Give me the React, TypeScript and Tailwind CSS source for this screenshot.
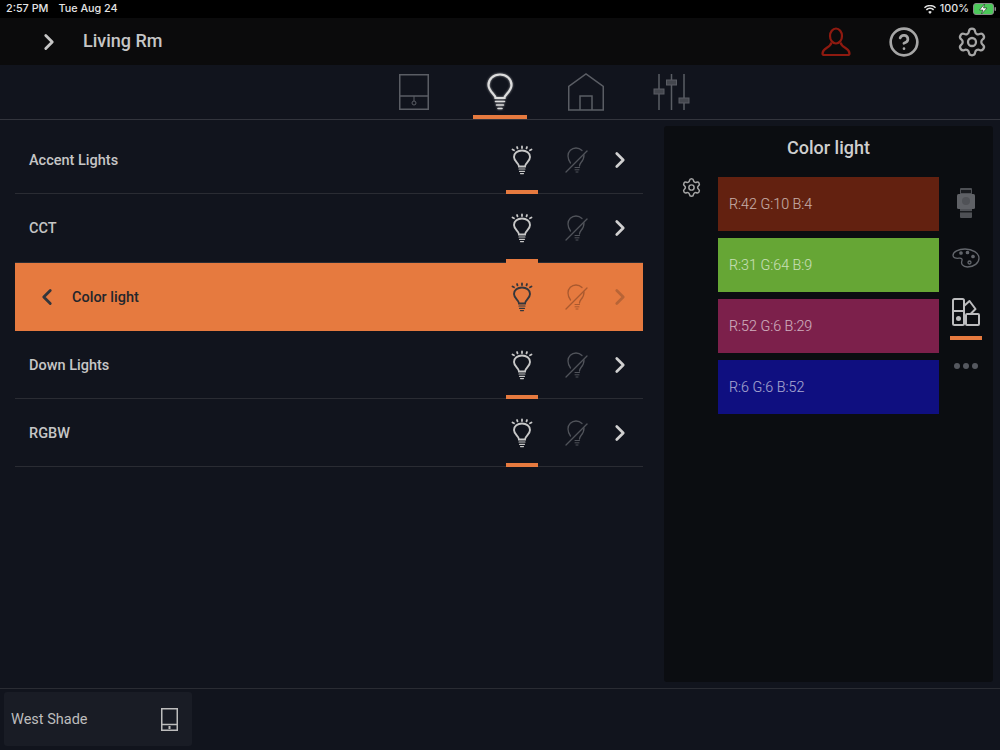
import { ChevronLeft, ChevronRight, CircleHelp, Settings } from 'lucide-react'

const rows = ['Accent Lights', 'CCT', 'Color light', 'Down Lights', 'RGBW']

const swatches = [
  { label: 'R:42 G:10 B:4', color: 'bg-[#632110]' },
  { label: 'R:31 G:64 B:9', color: 'bg-[#66a635]' },
  { label: 'R:52 G:6 B:29', color: 'bg-[#7c204b]' },
  { label: 'R:6 G:6 B:52', color: 'bg-[#0f0f80]' },
]

function UserIcon() {
  return (
    <svg width="30" height="30" viewBox="0 0 30 30" fill="none" stroke="#8f1a10" strokeWidth="2.200">
      <ellipse cx="15" cy="9" rx="6" ry="7.500" />
      <path d="M10.500 15.500c-.5 2.500-2.500 4-5 5.500C3 22.500 1.500 24.500 1.500 26.500c0 1 .8 1.500 2 1.500h23c1.200 0 2-.5 2-1.500 0-2-1.500-4-4-5.500-2.500-1.500-4.500-3-5-5.500" />
    </svg>
  )
}

function ShadeIcon({ className }: { className?: string }) {
  return (
    <svg className={className} viewBox="0 0 30 36" fill="none" stroke="#5a5d64" strokeWidth="1.500">
      <rect x="0.750" y="0.750" width="28.500" height="34.500" />
      <path d="M0.750 22h28.500" />
      <path d="M15 22v5" strokeWidth="1" />
      <circle cx="15" cy="29" r="2" strokeWidth="1" />
    </svg>
  )
}

function TabBulb() {
  return (
    <svg
      className="drop-shadow-[0_0_1px_#ffffff90]"
      width="28"
      height="38"
      viewBox="0 0 28 38"
      fill="none"
      stroke="#dcdcdc"
      strokeWidth="2.200"
      strokeLinecap="round"
    >
      <path d="M9.500 25c0-3.500-7-6.500-7-13C2.500 6 7.500 1.500 14 1.500S25.500 6 25.500 12c0 6.500-7 9.500-7 13z" />
      <path d="M9.500 28.500h9M10.500 32h7M12 35.500h4" strokeWidth="1.600" />
    </svg>
  )
}

function HouseIcon() {
  return (
    <svg width="36" height="38" viewBox="0 0 36 38" fill="none" stroke="#5a5d64" strokeWidth="1.500">
      <path d="M.750 37V13.500L18 1l17.250 12.500V37z" />
      <path d="M12 37V23h12v14" />
    </svg>
  )
}

function SlidersIcon() {
  return (
    <svg width="38" height="38" viewBox="0 0 38 38" fill="none">
      <path d="M6 1v36M18.500 1v36M31 1v36" stroke="#5a5d64" strokeWidth="1.500" />
      <rect x="1" y="16" width="10" height="5" fill="#44474e" stroke="#5a5d64" />
      <rect x="13.500" y="7" width="10" height="5" fill="#44474e" stroke="#5a5d64" />
      <rect x="26" y="25" width="10" height="5" fill="#44474e" stroke="#5a5d64" />
    </svg>
  )
}

function RayBulb({ stroke }: { stroke: string }) {
  return (
    <svg width="22" height="30" viewBox="0 0 22 30" fill="none" stroke={stroke} strokeLinecap="round">
      <path d="M1.500 4.500l1.500.8M6 2l.5 1.400M11 1.500V3M16 2l-.5 1.400M20.500 4.500l-1.500.8" strokeWidth="1.800" />
      <path d="M8 21.500c0-3-5-5-5-9.500 0-3.700 3.500-6.500 8-6.500s8 2.800 8 6.500c0 4.500-5 6.500-5 9.500z" strokeWidth="1.900" />
      <path d="M8 24h6M8.500 26.300h5M9.500 28.600h3" strokeWidth="1.200" />
    </svg>
  )
}

function OffBulb({ stroke }: { stroke: string }) {
  return (
    <svg width="24" height="28" viewBox="0 0 24 28" fill="none" stroke={stroke} strokeLinecap="round">
      <path d="M6.500 17C5 15 4 12.500 4 10c0-4.500 3.500-8 8-8 2.500 0 4.500 1 6 2.500M20 9c0 3-1 5.500-3 7.500-1 1.300-1.500 2-1.500 3.500" strokeWidth="1.300" />
      <path d="M2 26L23 5" strokeWidth="1.300" />
      <path d="M11 21.500h4.500M11 23.800h4M12 26h2" strokeWidth="1" />
    </svg>
  )
}

function RemoteIcon() {
  return (
    <svg width="20" height="30" viewBox="0 0 20 30">
      <rect x="4" y="0" width="12" height="30" fill="#4e5055" rx="1" />
      <rect x="1" y="6" width="18" height="15" fill="#5f6166" rx="1.500" />
      <circle cx="10" cy="13" r="4" fill="#505257" />
      <rect x="5" y="2" width="10" height="3" fill="#1a1c20" />
      <rect x="4" y="23" width="12" height="1.500" fill="#1a1c20" />
    </svg>
  )
}

function PaletteIcon() {
  return (
    <svg width="28" height="20" viewBox="0 0 28 20" fill="none" stroke="#63666c" strokeWidth="1.300">
      <path d="M13 1C6.500 1 1 4 1 7.500c0 2.500 3 3 6 2.700 3-.3 3.500 1 2.800 3-.8 2.200.5 5.800 5.700 5.800 6.500 0 11.500-4 11.500-9S20.500 1 13 1z" />
      <circle cx="9" cy="5" r="1.200" fill="#63666c" />
      <circle cx="15.500" cy="4.500" r="1.200" fill="#63666c" />
      <circle cx="21" cy="8.500" r="1.200" fill="#63666c" />
      <circle cx="17.500" cy="14.500" r="1.500" />
    </svg>
  )
}

function SwatchesIcon() {
  return (
    <svg width="28" height="28" viewBox="0 0 28 28" fill="none" stroke="#bcbcbe" strokeWidth="2" strokeLinejoin="round">
      <rect x="1" y="1" width="11" height="26" rx="1.500" />
      <path d="M1 13h11" />
      <circle cx="6.500" cy="20.500" r="2.500" fill="#bcbcbe" stroke="none" />
      <path d="M12 8l5.500-5 6 8-5 5" />
      <rect x="14" y="16" width="13" height="11" rx="1" />
    </svg>
  )
}

function ListRow({ name }: { name: string }) {
  const active = name === 'Color light'
  return (
    <div
      className={`relative flex h-[68.300px] shrink-0 items-center ${
        active ? 'bg-[#e67a3f] text-[#23262c]' : 'border-b border-[#2a2c33] text-[#c6c6c6]'
      }`}
    >
      {active ? (
        <>
          <ChevronLeft className="ml-[19px] text-[#33363c]" size={26} strokeWidth={2.600} />
          <span className="ml-[12px] flex-1 pt-[2px] text-[14.500px] font-medium">{name}</span>
        </>
      ) : (
        <span className="ml-[14px] flex-1 pt-[2px] text-[14.500px] font-medium">{name}</span>
      )}
      <div className="flex w-[32px] justify-center">
        <RayBulb stroke={active ? '#33363c' : '#c8c8c8'} />
      </div>
      <div className="ml-[22px] flex w-[32px] justify-center">
        <OffBulb stroke={active ? '#a9592f' : '#50535a'} />
      </div>
      <div className="ml-[15px] mr-[10px] flex w-[26px] justify-center">
        <ChevronRight className={active ? 'text-[#b86436]' : 'text-[#d0d0d0]'} size={26} strokeWidth={2.500} />
      </div>
      {!active && <div className="absolute bottom-[-1px] right-[105px] h-[4px] w-[32px] bg-[#e67a3f]" />}
    </div>
  )
}

export default function App() {
  return (
    <div className="flex h-[750px] w-[1000px] flex-col overflow-hidden bg-[#11141d] font-[Roboto,sans-serif]">
      {/* Status bar */}
      <div className="flex h-[18px] items-center justify-between bg-black pl-[6px] pr-[4px] font-[Inter,sans-serif] text-[10.800px] font-medium text-[#e4e4e4]">
        <div className="flex gap-[10px]">
          <span>2:57 PM</span>
          <span>Tue Aug 24</span>
        </div>
        <div className="flex items-center gap-[4px]">
          <svg width="12" height="9" viewBox="0 0 12 9" fill="#e4e4e4">
            <path d="M6 9L4.200 6.900a2.600 2.600 0 013.600 0zM2.900 5.500L1.800 4.300a6 6 0 018.400 0L9.100 5.500a4.500 4.500 0 00-6.200 0zM.9 3.300L0 2.200a8.700 8.700 0 0112 0l-.9 1.100a7.400 7.400 0 00-10.200 0z" />
          </svg>
          <span>100%</span>
          <svg width="23" height="12" viewBox="0 0 23 12">
            <rect x=".5" y=".5" width="20" height="11" rx="2.500" fill="#4cc85a" stroke="#8a8a8a" />
            <rect x="21.500" y="4" width="1.500" height="4" rx=".7" fill="#8a8a8a" />
            <path d="M11.500 1L6.500 7h3.500L8.500 11l5.500-6h-3.500z" fill="#fff" stroke="#101010" strokeWidth=".5" />
          </svg>
        </div>
      </div>

      {/* Header */}
      <div className="flex h-[47px] items-center bg-[#0b0b0c] pr-[12px] text-[#c6c6c6]">
        <ChevronRight className="ml-[36px]" size={26} strokeWidth={2.600} />
        <span className="ml-[21px] flex-1 pb-[2px] text-[18px] font-medium">Living Rm</span>
        <UserIcon />
        <CircleHelp className="ml-[37px] text-[#a6a6a6]" size={32} strokeWidth={2} />
        <Settings className="ml-[36px] text-[#a6a6a6]" size={32} strokeWidth={1.700} />
      </div>

      {/* Tabs */}
      <div className="flex h-[55px] shrink-0 border-b border-[#33353d] pl-[371px]">
        <div className="flex w-[86px] justify-center pt-[9px]">
          <ShadeIcon className="h-[36px] w-[30px]" />
        </div>
        <div className="relative flex w-[86px] justify-center pt-[8px]">
          <TabBulb />
          <div className="absolute bottom-0 left-[16px] h-[4px] w-[54px] bg-[#e67a3f]" />
        </div>
        <div className="flex w-[86px] justify-center pt-[8px]">
          <HouseIcon />
        </div>
        <div className="flex w-[86px] justify-center pt-[8px]">
          <SlidersIcon />
        </div>
      </div>

      {/* Main */}
      <div className="flex min-h-0 flex-1 pl-[15px] pt-[6px]">
        <div className="flex w-[628px] flex-col">
          {rows.map((name) => (
            <ListRow key={name} name={name} />
          ))}
        </div>

        <div className="ml-[21px] h-[556px] w-[329px] rounded-[3px] bg-[#0b0d11]">
          <div className="flex h-[51px] items-center justify-center pb-[9px] text-[18px] font-medium text-[#cfcfcf]">
            Color light
          </div>
          <div className="flex">
            <div className="flex w-[54px] justify-center">
              <Settings className="text-[#a6a6a6]" size={21} strokeWidth={1.700} />
            </div>
            <div className="flex w-[221px] flex-col gap-[7px]">
              {swatches.map((s) => (
                <div key={s.label} className={`flex h-[54px] items-center pl-[11px] pt-[1px] text-[14.300px] font-light text-white/65 ${s.color}`}>
                  {s.label}
                </div>
              ))}
            </div>
            <div className="flex w-[54px] flex-col items-center pt-[11px]">
              <RemoteIcon />
              <div className="mt-[30px] flex">
                <PaletteIcon />
              </div>
              <div className="mt-[30px] flex">
                <SwatchesIcon />
              </div>
              <div className="mt-[10px] h-[4px] w-[32px] bg-[#e67a3f]" />
              <div className="mt-[23px] flex gap-[3px]">
                <span className="h-[6px] w-[6px] rounded-full bg-[#55585f]" />
                <span className="h-[6px] w-[6px] rounded-full bg-[#55585f]" />
                <span className="h-[6px] w-[6px] rounded-full bg-[#55585f]" />
              </div>
            </div>
          </div>
        </div>
      </div>

      {/* Footer */}
      <div className="h-[62px] shrink-0 border-t border-[#2a2c33] pl-[4px] pt-[3px]">
        <div className="flex h-[54px] w-[188px] items-center justify-between rounded-[3px] bg-[#191c25] pl-[7px] pr-[14px] text-[14.500px] text-[#bdbdbd]">
          <span className="pt-[1px]">West Shade</span>
          <svg width="17" height="23" viewBox="0 0 17 23" fill="none" stroke="#bdbdbd" strokeWidth="1.500">
            <rect x=".75" y=".75" width="15.500" height="21.500" />
            <path d="M.75 16.500h15.500" />
            <path d="M8.500 18v3" strokeWidth="2" />
          </svg>
        </div>
      </div>
    </div>
  )
}
